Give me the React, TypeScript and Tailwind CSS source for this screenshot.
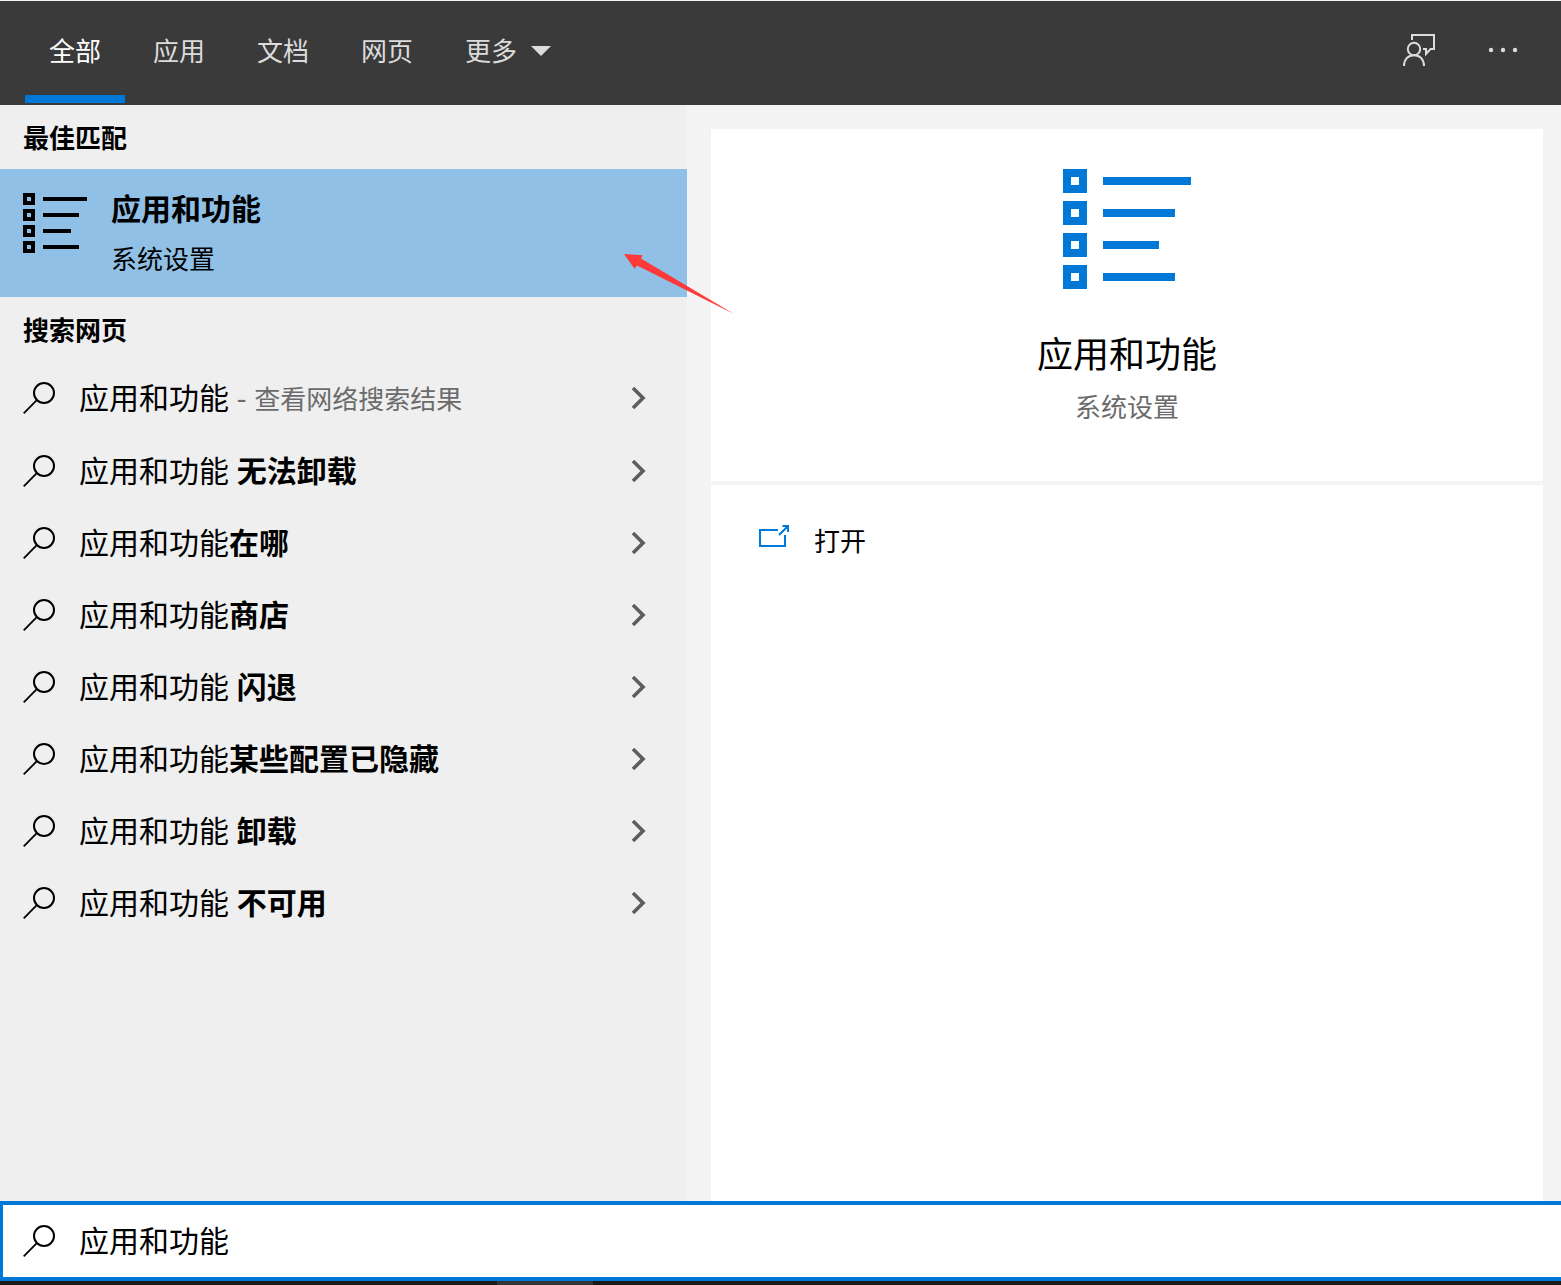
import { useState } from 'react'

const TABS = ['全部', '应用', '文档', '网页']

const QUERY = '应用和功能'

type Suggestion = {
  suffix: string
  spaced?: boolean
}

const SUGGESTIONS: Suggestion[] = [
  { suffix: '无法卸载', spaced: true },
  { suffix: '在哪' },
  { suffix: '商店' },
  { suffix: '闪退', spaced: true },
  { suffix: '某些配置已隐藏' },
  { suffix: '卸载', spaced: true },
  { suffix: '不可用', spaced: true },
]

function SearchIcon() {
  return (
    <svg width="32" height="32" viewBox="0 0 32 32" fill="none" stroke="black" className="shrink-0" aria-hidden="true">
      <circle cx="21" cy="11" r="10" strokeWidth="2" />
      <path d="M13.8 18.2 0.7 31.3" strokeWidth="1.8" />
    </svg>
  )
}

function ChevronIcon() {
  return (
    <svg width="16" height="24" viewBox="0 0 16 24" fill="none" stroke="#5d5d5d" strokeWidth="3.6" aria-hidden="true">
      <path d="M2 2 12 12 2 22" />
    </svg>
  )
}

// four checkbox rows, drawn on a 32 unit grid
function ListIcon({ className }: { className: string }) {
  return (
    <svg viewBox="0 0 32 32" fill="currentColor" className={className} aria-hidden="true">
      <path
        fillRule="evenodd"
        d="M0 1h6v6H0zM2 3v2h2V3zM0 9h6v6H0zM2 11v2h2v-2zM0 17h6v6H0zM2 19v2h2v-2zM0 25h6v6H0zM2 27v2h2v-2z"
      />
      <path d="M10 3h22v2H10zM10 11h18v2H10zM10 19h14v2H10zM10 27h18v2H10z" />
    </svg>
  )
}

function FeedbackIcon() {
  return (
    <svg width="32" height="32" viewBox="0 0 32 32" fill="none" stroke="#dcdcdc" strokeWidth="2" aria-hidden="true">
      <circle cx="11" cy="15" r="6.2" />
      <path d="M1 32c0-6.500 4-10.800 10-10.800S21 25.500 21 32" />
      <path d="M9 6V1h22v14h-3.500L23 20v-5h-3" />
    </svg>
  )
}

function OpenIcon() {
  return (
    <svg width="31" height="23" viewBox="0 0 31 23" fill="none" stroke="#0078d7" strokeWidth="2" aria-hidden="true">
      <path d="M19 5H1v16h25V10" />
      <path d="M20 10 29 1M23.500 1H29v6" />
    </svg>
  )
}

function ResultRow({ children, className }: { children: React.ReactNode; className: string }) {
  return (
    <li className={`flex items-center ${className}`}>
      <button type="button" className="flex flex-1 items-center gap-6 pl-[23px] text-left">
        <SearchIcon />
        <span className="text-[30px] leading-10 whitespace-pre">{children}</span>
      </button>
      <button type="button" aria-label="展开" className="flex h-full w-20 items-center pl-6">
        <ChevronIcon />
      </button>
    </li>
  )
}

export default function App() {
  const [activeTab, setActiveTab] = useState(TABS[0])
  const [query, setQuery] = useState(QUERY)

  return (
    <div className="flex min-h-screen flex-col bg-[#f4f4f4] font-['Open_Sans','Noto_Sans_CJK_SC',sans-serif] text-black">
      <header className="flex h-[105px] items-stretch border-t border-[#eef4f2] bg-[#3a3a3a] pr-[18px] pl-[25px] text-[26px] leading-9">
        <nav className="flex gap-1">
          {TABS.map((tab) => (
            <button
              key={tab}
              type="button"
              onClick={() => setActiveTab(tab)}
              className={`mb-0.5 border-b-8 px-6 pt-1.5 ${
                tab === activeTab ? 'border-[#0078d7] text-white' : 'border-transparent text-[#dcdcdc]'
              }`}
            >
              {tab}
            </button>
          ))}
          <button
            type="button"
            className="mb-0.5 flex items-center gap-3.5 border-b-8 border-transparent px-6 pt-1.5 text-[#dcdcdc]"
          >
            更多
            <svg width="20" height="10" viewBox="0 0 20 10" fill="#dcdcdc" aria-hidden="true">
              <path d="M0 0h20L10 10z" />
            </svg>
          </button>
        </nav>
        <div className="ml-auto flex items-center gap-1 pb-1.5">
          <button type="button" aria-label="反馈" className="px-6">
            <FeedbackIcon />
          </button>
          <button type="button" aria-label="更多选项" className="px-6">
            <svg width="32" height="6" viewBox="0 0 32 6" fill="#dcdcdc" aria-hidden="true">
              <circle cx="4" cy="3" r="2.200" />
              <circle cx="16" cy="3" r="2.200" />
              <circle cx="28" cy="3" r="2.200" />
            </svg>
          </button>
        </div>
      </header>

      <div className="flex flex-1">
        <section className="w-[687px] shrink-0 bg-[#efefef]">
          <h2 className="flex h-16 items-center pt-0.5 pl-[23px] text-[26px] leading-9 font-bold">最佳匹配</h2>
          <div className="relative">
            <button type="button" className="flex h-32 w-full items-start gap-6 bg-[#91c0e7] pt-5 pl-[23px] text-left">
              <ListIcon className="mt-0.5 size-16" />
              <span className="flex flex-col gap-3">
                <span className="text-[30px] leading-10 font-bold">应用和功能</span>
                <span className="text-[26px] leading-9">系统设置</span>
              </span>
            </button>
            <svg
              width="110"
              height="60"
              viewBox="0 0 110 60"
              fill="#fd3a39"
              className="absolute top-[85px] left-[624px] z-10"
              aria-hidden="true"
            >
              <path d="M0 0 18.500 1.300 17 4.500 110 60 13 11.500 10.500 14.800z" />
            </svg>
          </div>

          <h2 className="flex h-16 items-center pt-0.5 pl-[23px] text-[26px] leading-9 font-bold">搜索网页</h2>
          <ul>
            <ResultRow className="h-[74px]">
              {QUERY}
              <span className="text-[#6b6b6b]">
                {' - '}
                <span className="text-[26px]">查看网络搜索结果</span>
              </span>
            </ResultRow>
            {SUGGESTIONS.map((s) => (
              <ResultRow key={s.suffix} className="h-[72px]">
                {QUERY}
                {s.spaced && ' '}
                <b>{s.suffix}</b>
              </ResultRow>
            ))}
          </ul>
        </section>

        <main className="flex flex-1 flex-col gap-1 pt-6 pr-[18px] pl-6">
          <div className="flex h-[352px] flex-col items-center bg-white pt-9">
            <ListIcon className="size-32 text-[#0078d7]" />
            <h1 className="mt-9 text-[36px] leading-[52px]">应用和功能</h1>
            <p className="mt-2 text-[26px] leading-9 text-[#6b6b6b]">系统设置</p>
          </div>
          <div className="flex-1 bg-white pt-9">
            <button type="button" className="flex items-start gap-6 pl-12 text-[26px] leading-10">
              <span className="pt-1">
                <OpenIcon />
              </span>
              打开
            </button>
          </div>
        </main>
      </div>

      <label className="flex h-20 items-center gap-6 border-y-4 border-l-3 border-[#0078d7] bg-white pl-5">
        <SearchIcon />
        <input
          type="text"
          aria-label="搜索"
          value={query}
          onChange={(e) => setQuery(e.target.value)}
          className="h-10 flex-1 text-[30px] leading-10 outline-none"
        />
      </label>
      <div className="flex h-1 bg-[#1b1a19] pl-[497px]">
        <div className="w-24 bg-[#353535]" />
      </div>
    </div>
  )
}
